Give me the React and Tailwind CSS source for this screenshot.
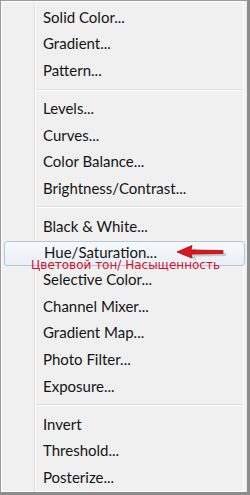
import React from "react";

const groups = [
  ["Solid Color...", "Gradient...", "Pattern..."],
  ["Levels...", "Curves...", "Color Balance...", "Brightness/Contrast..."],
  ["Black & White...", "Hue/Saturation...", "Selective Color...", "Channel Mixer...", "Gradient Map...", "Photo Filter...", "Exposure..."],
  ["Invert", "Threshold...", "Posterize..."],
];

function Gutter() {
  return <div className="w-[33px] shrink-0 border-r border-r-[#dedede] shadow-[1px_0_0_#ffffff]" />;
}

function Row({ label }) {
  const hl = label === "Hue/Saturation...";
  if (hl) {
    return (
      <div className="relative flex h-[26.67px] items-center">
        <div className="absolute left-[2px] right-[-2px] top-[1px] bottom-[0px] rounded-[3px] border border-[#b3c6dc] bg-gradient-to-b from-[#f7f9fc] to-[#e9eff6]" />
        <div className="relative pl-[42px] text-[15px] leading-none text-[#151515]">{label}</div>
      </div>
    );
  }
  return (
    <div className="flex h-[26.67px] items-stretch">
      <Gutter />
      <div className="flex items-center pl-[8px] text-[15px] leading-none text-[#151515]">{label}</div>
    </div>
  );
}

function Sep() {
  return (
    <div className="flex h-[11.2px] items-stretch">
      <Gutter />
      <div className="flex flex-1 flex-col justify-center pl-[1px]">
        <div className="h-px bg-[#dedede]" />
        <div className="h-px bg-white" />
      </div>
    </div>
  );
}

export default function App() {
  return (
    <div className="h-[495px] w-[250px] bg-[#f0f0f0]" style={{ fontFamily: 'Lato, "Noto Sans", sans-serif' }}>
      <div className="relative h-full w-full border-l border-t border-r-[3px] border-b-[3px] border-l-[#9a9a9a] border-t-[#9a9a9a] border-r-[#8c8c8c] border-b-[#8c8c8c] pr-[3px]">
        <div className="flex h-full flex-col border border-white pt-[2px]">
          {groups.map((g, gi) => (
            <React.Fragment key={gi}>
              {gi > 0 && <Sep />}
              {g.map((l) => (
                <Row key={l} label={l} />
              ))}
            </React.Fragment>
          ))}
          <div className="flex flex-1">
            <Gutter />
          </div>
        </div>
        <div
          className="absolute left-[30px] top-[258px] whitespace-nowrap text-[12px] leading-none text-[#d2122a]"
          style={{ fontFamily: '"DejaVu Sans", Verdana, sans-serif' }}
        >
          Цветовой тон/ Насыщенность
        </div>
        <svg className="absolute left-[174px] top-[242px]" width="54" height="18" viewBox="0 0 54 18">
          <path d="M4 9 L19 3 L18 7.5 L49 8 L49 11 L18 11.5 L19 15 Z" fill="#9a9a9a" opacity="0.45" transform="translate(2,2)" />
          <path d="M2 9 L17 2.5 L16 7 L48 7.5 L48 10.5 L16 11 L17 15 Z" fill="#e0141e" stroke="#a50a10" strokeWidth="0.8" strokeLinejoin="round" />
        </svg>
      </div>
    </div>
  );
}
